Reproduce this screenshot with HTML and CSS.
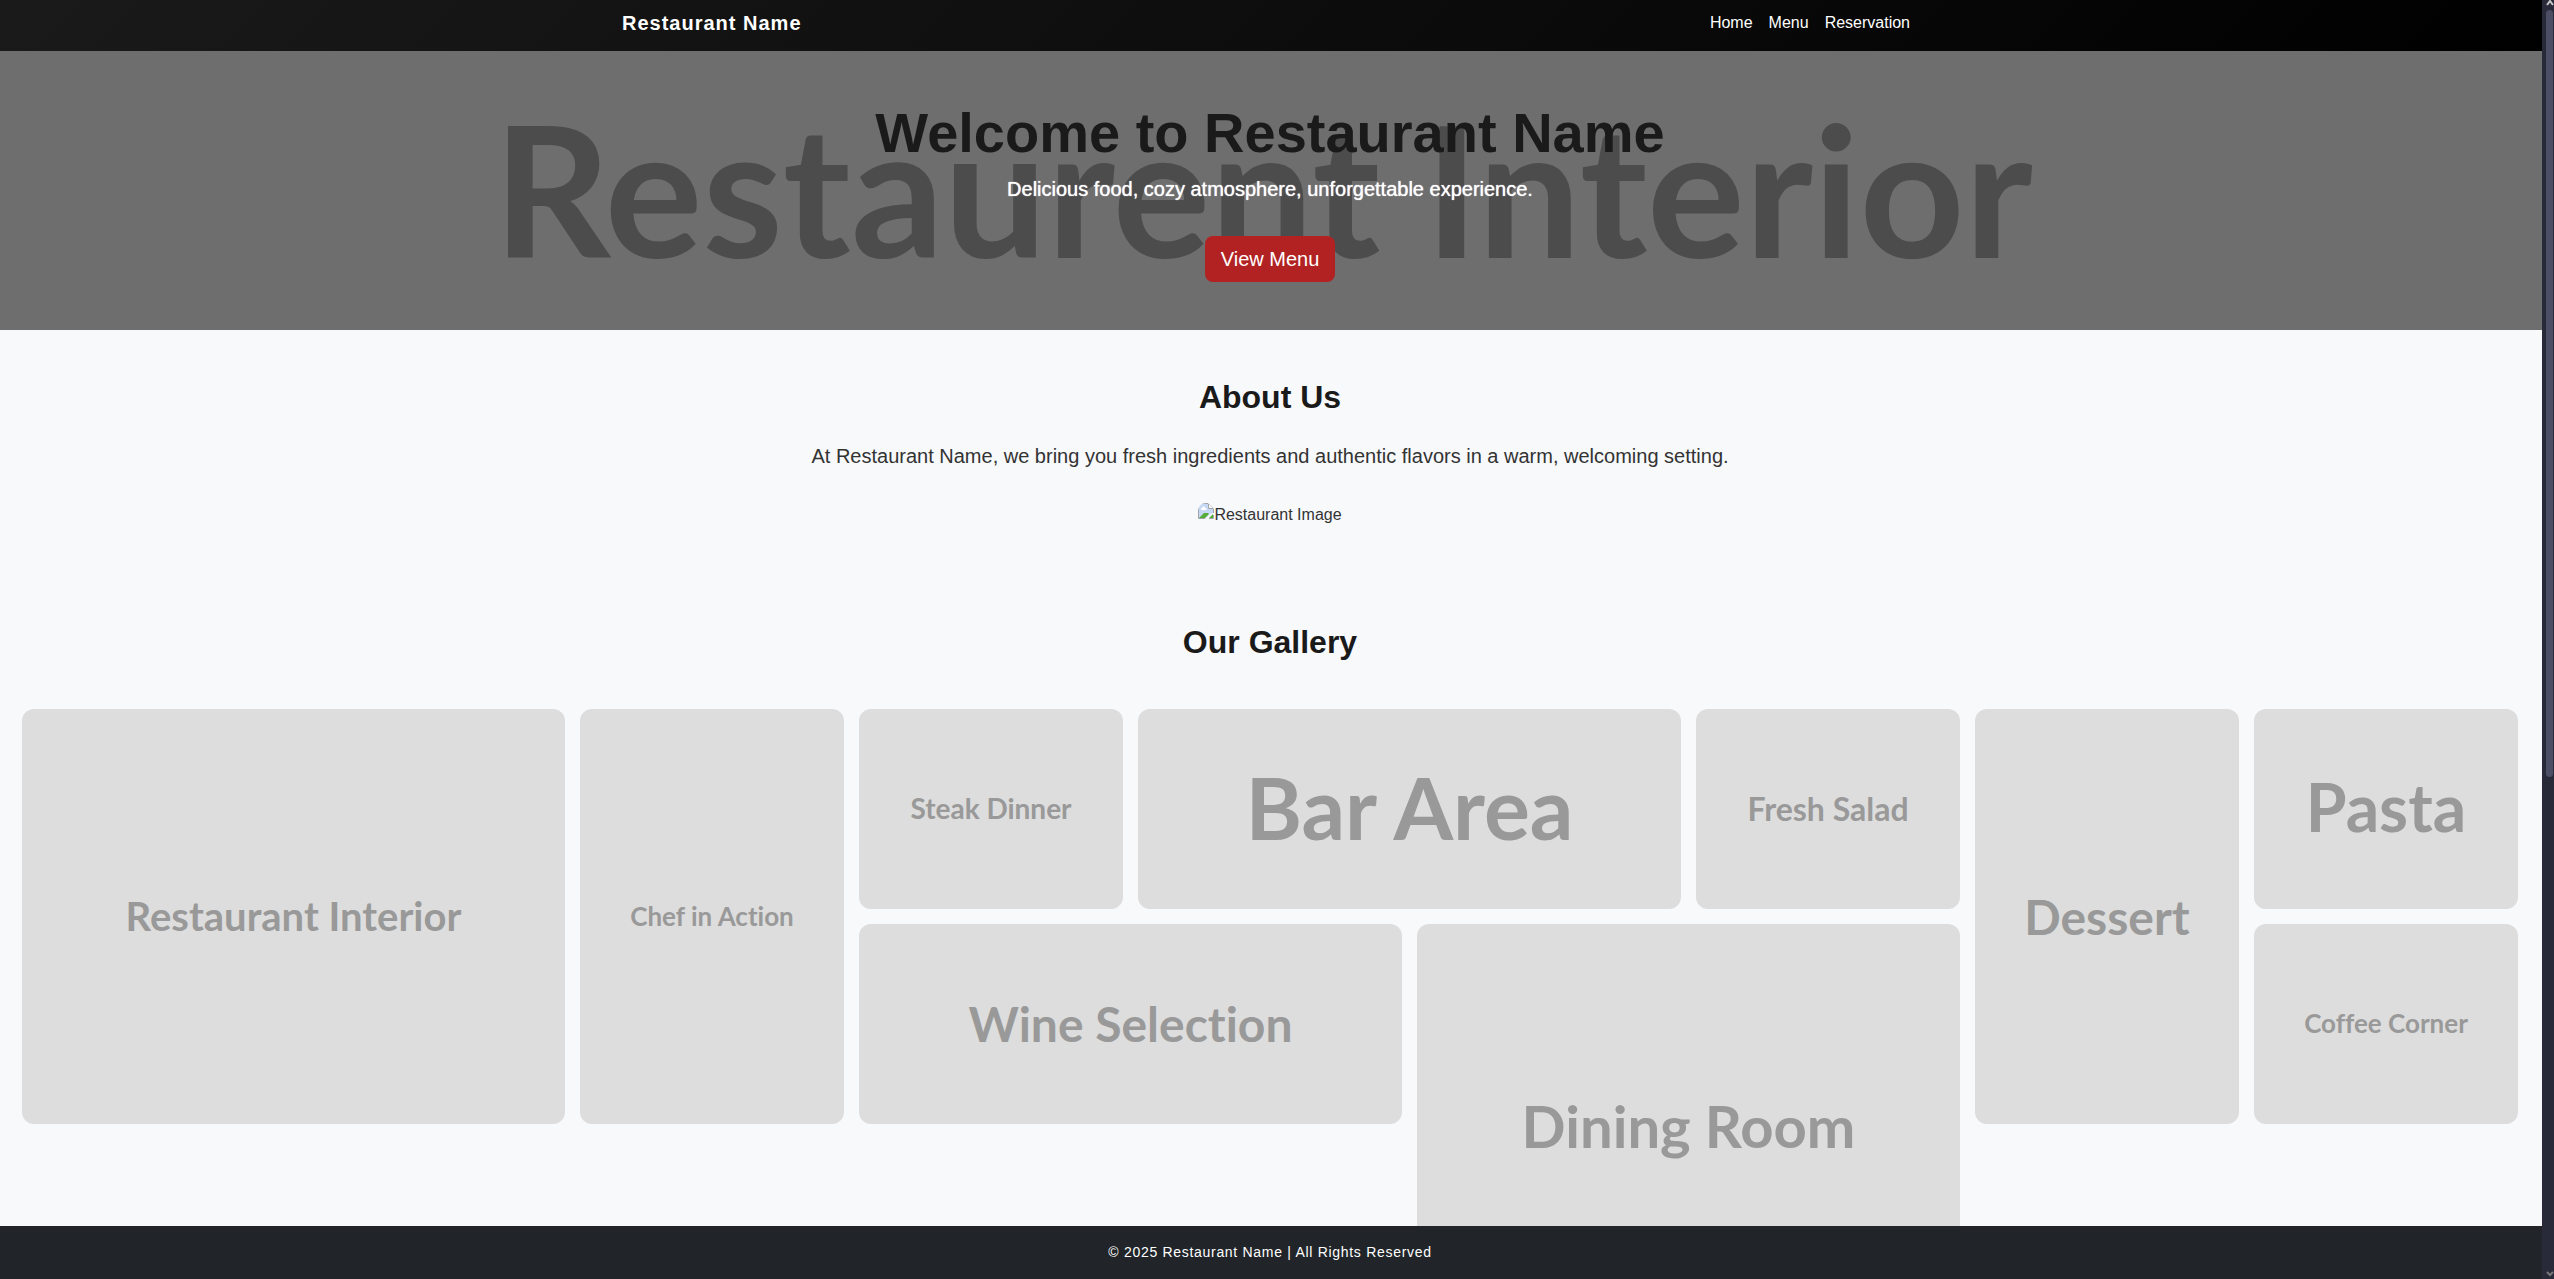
FILE: index.html
```html
<!DOCTYPE html>
<html lang="en">
<head>
<meta charset="utf-8">
<meta name="viewport" content="width=device-width, initial-scale=1">
<title>Restaurant Name</title>
<link rel="stylesheet" href="styles.css">
</head>
<body>
<div class="page">
  <header class="site-header">
    <div class="container">
      <a class="brand" href="#">Restaurant Name</a>
      <nav class="nav">
        <a href="#">Home</a>
        <a href="#gallery">Menu</a>
        <a href="#about">Reservation</a>
      </nav>
    </div>
  </header>
  <main class="content">
    <section class="hero">
      <div class="hero-backdrop" aria-hidden="true">Restaurent Interior</div>
      <div class="hero-body">
        <h1>Welcome to Restaurant Name</h1>
        <p class="lead">Delicious food, cozy atmosphere, unforgettable experience.</p>
        <button class="btn" type="button">View Menu</button>
      </div>
    </section>
    <section class="section" id="about">
      <h2>About Us</h2>
      <p class="lead">At Restaurant Name, we bring you fresh ingredients and authentic flavors in a warm, welcoming setting.</p>
      <div class="photo">
        <svg width="16" height="16" viewBox="0 0 16 16" aria-hidden="true">
          <path d="M1 1h9l5 5v4l-3 1-5 5H1z" fill="#c6d8f6"/>
          <path d="M3 6c0-1 1-1 1-1 1-2 3-2 3 0 2 0 2 2 1 2H3z" fill="#fff"/>
          <path d="M1 15l5-5h4l1 1-4 4z" fill="#55ad38"/>
          <path d="M11 15l4-4v4z" fill="#55ad38"/>
          <path d="M7 15.500H.500V.500H10L15.500 6v4M15.500 12v3.500H11" fill="none" stroke="#a0a4a8"/>
          <path d="M10.500 1v4.500H15" fill="#fff" stroke="#a0a4a8"/>
        </svg><span>Restaurant Image</span>
      </div>
    </section>
    <section class="section" id="gallery">
      <h2>Our Gallery</h2>
      <div class="gallery">
        <div class="tile wide tall text-40">Restaurant Interior</div>
        <div class="tile tall text-26">Chef in Action</div>
        <div class="tile text-28">Steak Dinner</div>
        <div class="tile wide text-86">Bar Area</div>
        <div class="tile text-32">Fresh Salad</div>
        <div class="tile tall text-48">Dessert</div>
        <div class="tile text-66">Pasta</div>
        <div class="tile wide text-48">Wine Selection</div>
        <div class="tile wide tall text-58">Dining Room</div>
        <div class="tile text-26">Coffee Corner</div>
      </div>
    </section>
  </main>
  <footer class="site-footer">© 2025 Restaurant Name | All Rights Reserved</footer>
</div>
<div class="scrollbar" aria-hidden="true">
  <svg width="8" height="6" viewBox="0 0 8 6"><path d="M1 5l3-4 3 4" fill="none" stroke="#c8c8c8" stroke-width="2"/></svg>
  <div class="track"><div class="thumb"></div></div>
  <svg width="8" height="6" viewBox="0 0 8 6"><path d="M1 1l3 3 3-3" fill="none" stroke="#777" stroke-width="2"/></svg>
</div>
</body>
</html>
```
FILE: styles.css
```css
* { box-sizing: border-box; }

body {
  margin: 0;
  height: 100vh;
  display: grid;
  grid-template-columns: minmax(0, 1fr) 12px;
  background: #f8f9fb;
  color: #333;
  font: 16px/24px "Liberation Sans", Arial, sans-serif;
}

h1, h2, p { margin: 0; }

.page {
  height: 100vh;
  display: flex;
  flex-direction: column;
}

.site-header {
  flex: none;
  padding: 8px 2px 13px 0;
  background: linear-gradient(135deg, #1a1a1a, #000);
}

.container {
  max-width: 1320px;
  margin: 0 auto;
  padding: 0 12px;
  display: flex;
  justify-content: space-between;
  align-items: center;
}

.brand {
  color: #fff;
  font-size: 20px;
  font-weight: 700;
  line-height: 30px;
  letter-spacing: 1px;
  text-decoration: none;
}

.nav { display: flex; }

.nav a {
  padding: 0 8px;
  color: #fff;
  text-decoration: none;
}

.content {
  flex: 1;
  min-height: 0;
  overflow: hidden auto;
  scrollbar-width: none;
}

.hero {
  position: relative;
  padding: 48px 2px 48px 0;
  background: #6e6e6e;
  text-align: center;
  overflow: hidden;
}

.hero-backdrop {
  position: absolute;
  inset: 0;
  padding: 0 16px 8px 0;
  display: flex;
  justify-content: center;
  align-items: center;
  color: #4c4c4c;
  font-family: Lato, sans-serif;
  font-size: 183px;
  font-weight: 700;
  white-space: nowrap;
}

.hero-body { position: relative; }

h1 {
  color: #1a1a1a;
  font-size: 56px;
  line-height: 1.2;
  margin-bottom: 8px;
}

h2 {
  color: #1a1a1a;
  font-size: 32px;
  line-height: 1.2;
}

.lead {
  font-size: 20px;
  line-height: 30px;
  margin-bottom: 32px;
}

.hero .lead {
  color: #fff;
  text-shadow: 0 0 1px #fff;
}

.btn {
  display: block;
  margin: 0 auto;
  padding: 8px 16px;
  border: 0;
  border-radius: 8px;
  background: #b22222;
  color: #fff;
  font: 20px/30px "Liberation Sans", Arial, sans-serif;
}

.section {
  padding: 48px 2px 48px 0;
  text-align: center;
}

.section .lead { margin-top: 24px; }

.photo {
  display: flex;
  justify-content: center;
}

.photo svg { border-top-left-radius: 8px; }

.gallery {
  margin-top: 48px;
  padding: 0 22px;
  display: grid;
  grid-template-columns: repeat(auto-fill, minmax(250px, 1fr));
  grid-auto-rows: 200px;
  grid-auto-flow: dense;
  gap: 15px;
}

.tile {
  display: flex;
  justify-content: center;
  align-items: center;
  border-radius: 12px;
  background: #ddd;
  color: #999;
  font-family: Lato, sans-serif;
  font-weight: 700;
  font-variant-ligatures: none;
  line-height: 1.2;
  white-space: nowrap;
}

.wide { grid-column: span 2; }
.tall { grid-row: span 2; }

.text-26 { font-size: 26px; }
.text-28 { font-size: 28px; }
.text-32 { font-size: 32px; }
.text-40 { font-size: 40px; }
.text-48 { font-size: 48px; }
.text-58 { font-size: 58px; padding-bottom: 12px; }
.text-66 { font-size: 66px; padding-bottom: 4px; }
.text-86 { font-size: 86px; padding-bottom: 4px; }

.site-footer {
  flex: none;
  padding: 14px 2px 15px 0;
  background: #212529;
  color: #fff;
  font-size: 14px;
  letter-spacing: 0.05em;
  text-align: center;
}

.scrollbar {
  height: 100vh;
  padding: 0 0 2px 4px;
  display: flex;
  flex-direction: column;
  gap: 4px;
  background: #282a3a;
}

.scrollbar svg { display: block; flex: none; }

.track { flex: 1; }

.thumb {
  width: 7px;
  height: 61%;
  border-radius: 4px;
  background: #4b4e65;
}
```
